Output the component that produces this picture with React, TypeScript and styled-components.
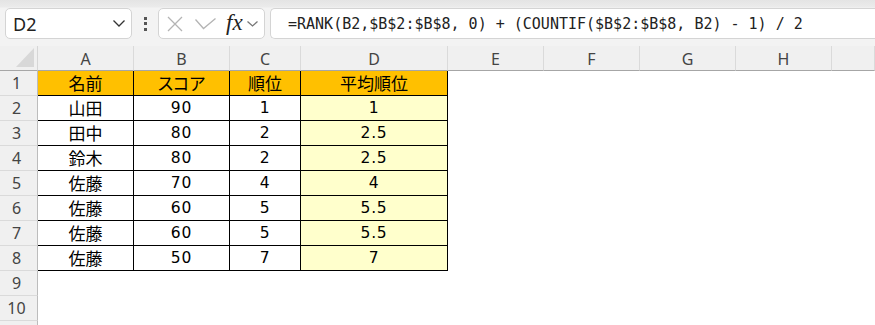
import React from 'react';
import styled, { createGlobalStyle } from 'styled-components';

const GlobalStyle = createGlobalStyle`
    html, body {
        margin: 0;
        padding: 0;
        background: #FFF;
    }
    body {
        font-family: "Noto Sans", "Noto Sans CJK JP", sans-serif;
        overflow: hidden;
    }
`;

const UI_FONT = `"Noto Sans", "Liberation Sans", sans-serif`;
const CELL_FONT = `"DejaVu Sans", "Noto Sans CJK JP", sans-serif`;

// Formula bar
const FormulaBar = styled.div`
    height: 46px;
    box-sizing: border-box;
    padding: 8px 0 0 5px;
    display: flex;
    align-items: flex-start;
    background: linear-gradient(#e4e4e4 0px, #ebebeb 7px, #f3f3f3 8px);
`;

const Box = styled.div`
    height: 31px;
    box-sizing: border-box;
    background: #FFF;
    border: 1px solid #d4d4d4;
    border-radius: 5px;
    display: flex;
    align-items: center;
`;

const NameBox = styled(Box)`
    width: 127px;
    padding: 0 6px 0 7px;
    justify-content: space-between;
    font-family: ${UI_FONT};
    font-size: 18px;
    color: #222;
`;

const Grip = styled.div`
    width: 26px;
    height: 31px;
    display: flex;
    flex-direction: column;
    align-items: center;
    justify-content: center;
    gap: 2.5px;

    span {
        width: 3px;
        height: 3px;
        background: #555;
    }
`;

const FxBox = styled(Box)`
    width: 107px;
    padding-left: 8px;
`;

const FxLabel = styled.span`
    font-family: "Liberation Serif", "DejaVu Serif", serif;
    font-style: italic;
    font-size: 23px;
    color: #222;
    margin: 0 4px 0 10px;
    line-height: 1;
    position: relative;
    top: -1px;
`;

const FormulaInput = styled(Box)`
    flex: 1;
    margin-left: 5px;
    border-right: none;
    border-radius: 5px 0 0 5px;
    padding-left: 17px;
    font-family: "DejaVu Sans Mono", "Liberation Mono", monospace;
    font-size: 15px;
    color: #222;
    white-space: pre;
`;

// Sheet
const Sheet = styled.div`
    display: grid;
    grid-template-columns: 38px 96px 96px 71px 147px 96px 96px 96px 96px 1fr;
    grid-auto-rows: 25px;
`;

const HeaderBase = styled.div`
    box-sizing: border-box;
    background: #f0f0f0;
    display: flex;
    align-items: center;
    justify-content: center;
    font-family: ${UI_FONT};
    font-size: 16px;
    color: #444;
`;

const Corner = styled(HeaderBase)`
    position: relative;
    border-right: 1px solid #d6d6d6;
    border-bottom: 1px solid #a6a6a6;

    &::after {
        content: '';
        position: absolute;
        right: 3px;
        bottom: 3px;
        width: 0;
        height: 0;
        border-left: 18px solid transparent;
        border-bottom: 19px solid #d8d8d8;
    }
`;

const ColHeader = styled(HeaderBase)`
    border-right: 1px solid #dadada;
    border-bottom: 1px solid #a6a6a6;
    padding-top: 1px;
`;

const RowHeader = styled(HeaderBase)`
    border-right: 1px solid #bcbcbc;
    border-bottom: 1px solid #dadada;
    padding-right: 4px;
`;

const Cell = styled.div<{ $fill?: string; $boxed?: boolean; $num?: boolean }>`
    box-sizing: border-box;
    background: ${p => p.$fill || '#FFF'};
    border-right: ${p => (p.$boxed ? '1px solid #000' : 'none')};
    border-bottom: ${p => (p.$boxed ? '1px solid #000' : 'none')};
    display: flex;
    align-items: center;
    justify-content: center;
    padding-top: 2px;
    font-family: ${CELL_FONT};
    font-size: ${p => (p.$num ? '15.5px' : '17px')};
    letter-spacing: ${p => (p.$num ? '0.8px' : '0')};
    font-feature-settings: ${p => (p.$num ? 'normal' : '"palt"')};
    color: #000;
    line-height: 1;
`;

const Chevron = ({ w = 12, h = 6, color = '#444' }: { w?: number; h?: number; color?: string }) => (
    <svg width={w} height={h + 1} viewBox={`0 0 ${w} ${h + 1}`}>
        <polyline points={`0.5,0.5 ${w / 2},${h} ${w - 0.5},0.5`} fill="none" stroke={color} strokeWidth="1.3" />
    </svg>
);

const CancelIcon = () => (
    <svg width="16" height="16" viewBox="0 0 16 16">
        <path d="M1 1 L15 15 M15 1 L1 15" stroke="#b4b4b4" strokeWidth="1.3" fill="none" />
    </svg>
);

const EnterIcon = () => (
    <svg width="21" height="12" viewBox="0 0 21 12" style={{ marginLeft: 12 }}>
        <polyline points="0.5,1.5 8.5,10.5 20.5,0.5" stroke="#b4b4b4" strokeWidth="1.3" fill="none" />
    </svg>
);

const columns = ['A', 'B', 'C', 'D', 'E', 'F', 'G', 'H', ''];

const table = [
    ['名前', 'スコア', '順位', '平均順位'],
    ['山田', '90', '1', '1'],
    ['田中', '80', '2', '2.5'],
    ['鈴木', '80', '2', '2.5'],
    ['佐藤', '70', '4', '4'],
    ['佐藤', '60', '5', '5.5'],
    ['佐藤', '60', '5', '5.5'],
    ['佐藤', '50', '7', '7'],
];

const ORANGE = '#FFC000';
const YELLOW = '#FFFFCC';

const App = () => {
    // row 11 only peeks in at the bottom edge, its number is out of view
    const rows = Array.from({ length: 11 }, (_, i) => i + 1);

    return (
        <>
            <GlobalStyle />
            <FormulaBar>
                <NameBox>
                    <span>D2</span>
                    <Chevron w={12} h={6} color="#333" />
                </NameBox>
                <Grip>
                    <span />
                    <span />
                    <span />
                </Grip>
                <FxBox>
                    <CancelIcon />
                    <EnterIcon />
                    <FxLabel>fx</FxLabel>
                    <Chevron w={11} h={5} color="#777" />
                </FxBox>
                <FormulaInput>=RANK(B2,$B$2:$B$8, 0) + (COUNTIF($B$2:$B$8, B2) - 1) / 2</FormulaInput>
            </FormulaBar>
            <Sheet>
                <Corner />
                {columns.map((c, i) => (
                    <ColHeader key={'c' + i}>{c}</ColHeader>
                ))}
                {rows.map(r => {
                    const data = table[r - 1];
                    return (
                        <React.Fragment key={r}>
                            <RowHeader>{r <= 10 ? r : ''}</RowHeader>
                            {columns.map((_, ci) => {
                                if (!data || ci > 3) return <Cell key={ci} />;
                                const fill = r === 1 ? ORANGE : ci === 3 ? YELLOW : '#FFF';
                                return (
                                    <Cell key={ci} $fill={fill} $boxed $num={r > 1 && ci > 0}>
                                        {data[ci]}
                                    </Cell>
                                );
                            })}
                        </React.Fragment>
                    );
                })}
            </Sheet>
        </>
    );
};

export default App;
